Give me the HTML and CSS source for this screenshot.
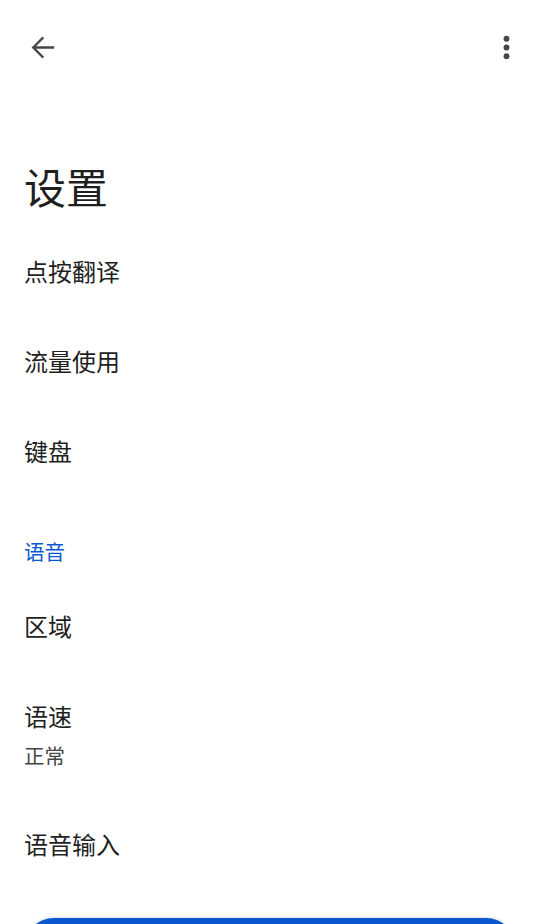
FILE: index.html
```html
<!DOCTYPE html>
<html lang="zh-CN">
<head>
<meta charset="utf-8">
<title>设置</title>
<link rel="stylesheet" href="styles.css">
</head>
<body>
<div class="screen">
  <header class="toolbar">
    <button class="icon-btn" aria-label="返回">
      <svg width="35" height="35" viewBox="0 0 24 24"><path d="M20 11.1H7.6l5.5-5.5L12 4.5 4.5 12l7.5 7.5 1.1-1.1-5.5-5.5H20z" fill="#444746"/></svg>
    </button>
    <button class="icon-btn" aria-label="更多">
      <svg width="35" height="35" viewBox="0 0 24 24"><circle cx="12" cy="6" r="2" fill="#444746"/><circle cx="12" cy="12" r="2" fill="#444746"/><circle cx="12" cy="18" r="2" fill="#444746"/></svg>
    </button>
  </header>
  <h1 class="page-title">设置</h1>
  <ul class="list">
    <li class="item">点按翻译</li>
    <li class="item">流量使用</li>
    <li class="item">键盘</li>
    <li class="section-header">语音</li>
    <li class="item">区域</li>
    <li class="item item-two">
      <span class="item-title">语速</span>
      <span class="item-sub">正常</span>
    </li>
    <li class="item">语音输入</li>
  </ul>
  <div class="bottom-bar"></div>
</div>
</body>
</html>
```

FILE: styles.css
```css
html, body {
  margin: 0;
  padding: 0;
  background: #ffffff;
}
body {
  font-family: "Noto Sans CJK SC", "Noto Sans", Roboto, sans-serif;
  color: #1f1f1f;
}
.screen {
  width: 540px;
  height: 924px;
  overflow: hidden;
  position: relative;
}
.toolbar {
  height: 95px;
  display: flex;
  align-items: center;
  justify-content: space-between;
  padding: 0 16px 0 25px;
}
.icon-btn {
  width: 35px;
  height: 35px;
  padding: 0;
  border: 0;
  background: none;
  display: flex;
}
.page-title {
  margin: 0;
  padding: 65px 24px 14px;
  font-size: 42px;
  line-height: 52px;
  font-weight: 400;
  color: #1f1f1f;
}
.list {
  list-style: none;
  margin: 0;
  padding: 0;
}
.item {
  height: 90px;
  display: flex;
  align-items: center;
  padding: 0 24px;
  font-size: 24px;
  line-height: 32px;
  color: #1f1f1f;
}
.section-header {
  height: 85px;
  box-sizing: border-box;
  padding: 41px 24px 16px;
  font-size: 20.5px;
  line-height: 28px;
  color: #0b57d0;
}
.item-two {
  height: 128px;
  box-sizing: border-box;
  flex-direction: column;
  align-items: flex-start;
  justify-content: flex-start;
  padding-top: 29px;
}
.item-title {
  line-height: 32px;
}
.item-sub {
  margin-top: 9px;
  font-size: 20.5px;
  line-height: 28px;
  color: #444746;
}
.bottom-bar {
  position: absolute;
  left: 24px;
  right: 24px;
  top: 918px;
  height: 60px;
  border-radius: 30px;
  background: #0b57d0;
  box-shadow: 0 -1px 3px rgba(0, 0, 0, 0.12);
}
```
